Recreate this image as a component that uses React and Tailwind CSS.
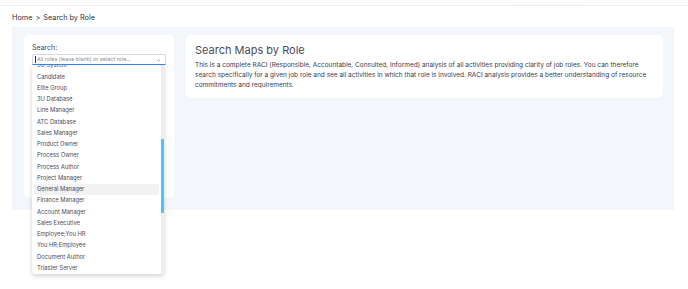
import React from 'react';

const roles = [
  '3U System',
  'Candidate',
  'Elite Group',
  '3U Database',
  'Line Manager',
  'ATC Database',
  'Sales Manager',
  'Product Owner',
  'Process Owner',
  'Process Author',
  'Project Manager',
  'General Manager',
  'Finance Manager',
  'Account Manager',
  'Sales Executive',
  'Employee;You HR',
  'You HR;Employee',
  'Document Author',
  'Triaster Server',
];

const App = () => {
  return (
    <div className="w-[688px] h-[289px] bg-white overflow-hidden font-['Inter',sans-serif]">
      {/* Top bar */}
      <div className="h-[6px] border-b border-[#eef0f3] relative">
        <div className="absolute left-[510px] top-[4px] w-[75px] h-[1px] shadow-[0_1px_4px_rgba(0,0,0,0.08)]" />
      </div>

      {/* Breadcrumb */}
      <div className="h-[21px] px-[12px] flex items-center pt-[3px] text-[7.3px] text-[#2f3040]">
        Home <span className="mx-[3px]">&gt;</span>Search by Role
      </div>

      {/* Panel */}
      <div className="ml-[12px] w-[662px] h-[183px] bg-[#f3f6fa] pt-[8px] pl-[12px] pr-[11px] pb-[12px] flex gap-[12px] items-start">
        {/* Search card */}
        <div className="w-[150px] h-[163px] bg-white rounded-[5px] px-[8px] pt-[8px]">
          <div className="text-[7px] text-[#454657] leading-[10px]">Search:</div>
          <div className="relative mt-[1px]">
            <div className="h-[11px] border border-[#d6d9de] border-b-[#3b82f6] rounded-t-[2px] flex items-center pl-[2px] pr-[4px]">
              <span className="w-[1px] h-[7px] bg-[#333] mr-[1px]" />
              <span className="text-[5.4px] text-[#8a8c96] flex-1 leading-none">All roles (leave blank) or select role...</span>
              <svg width="5" height="4" viewBox="0 0 10 8" className="text-[#888]">
                <path d="M2 6 L5 3 L8 6" fill="none" stroke="currentColor" strokeWidth="1.4" />
              </svg>
            </div>
            {/* Dropdown menu */}
            <div className="absolute left-0 top-full w-[132px] h-[209px] bg-white rounded-b-[3px] shadow-[0_2px_5px_rgba(0,0,0,0.18)] overflow-hidden z-10 flex">
              <div className="flex-1 pl-[2px] pr-[2px]">
                <div className="-mt-[5px]">
                  {roles.map((role) => (
                    <div
                      key={role}
                      className={`h-[11.25px] flex items-center pl-[3px] text-[5.8px] text-[#4a4b58] rounded-[1px] ${
                        role === 'General Manager' ? 'bg-[#f2f2f3]' : ''
                      }`}
                    >
                      {role}
                    </div>
                  ))}
                </div>
              </div>
              <div className="w-[3px] bg-[#ededed] flex flex-col">
                <div className="h-[74px] mt-[74px] bg-[#4fc3f7]" />
              </div>
            </div>
          </div>
        </div>

        {/* Info card */}
        <div className="flex-1 h-[63px] bg-white rounded-[5px] px-[9px] pt-[8px]">
          <h1 className="text-[11px] font-normal text-[#4a4b5e] leading-[14px]">Search Maps by Role</h1>
          <p className="mt-[3px] text-[6.5px] leading-[10px] text-[#3a3b4c]">
            This is a complete RACI (Responsible, Accountable, Consulted, Informed) analysis of all activities providing clarity of job roles. You can therefore search specifically for a given job role and see all activities in which that role is involved. RACI analysis provides a better understanding of resource commitments and requirements.
          </p>
        </div>
      </div>
    </div>
  );
};

export default App;
